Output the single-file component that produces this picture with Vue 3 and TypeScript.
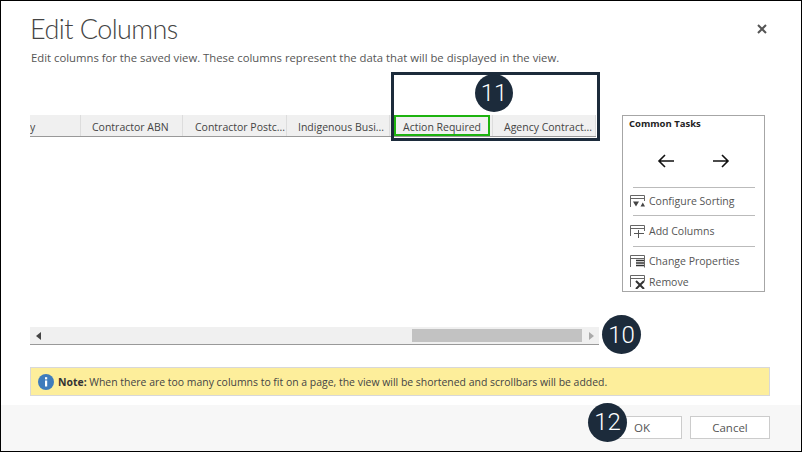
<script setup lang="ts">
const columns = [
  { label: 'y', cls: 'c0' },
  { label: 'Contractor ABN', cls: 'c1' },
  { label: 'Contractor Postc...', cls: 'c2' },
  { label: 'Indigenous Busi...', cls: 'c3' },
  { label: 'Action Required', cls: 'c4 selected' },
  { label: 'Agency Contract...', cls: 'c5' },
]
</script>

<template>
  <div class="dialog">
    <div class="main">
      <header class="head">
        <div>
          <h1 class="title">Edit Columns</h1>
          <p class="sub">Edit columns for the saved view. These columns represent the data that will be displayed in the view.</p>
        </div>
        <svg class="close" width="10" height="10" viewBox="0 0 10 10"><path d="M1 1l8 8M9 1l-8 8" stroke="#555" stroke-width="2" fill="none" /></svg>
      </header>

      <div class="work">
        <div class="grid-area">
          <div class="cols">
            <div v-for="c in columns" :key="c.label" class="col" :class="c.cls">{{ c.label }}</div>
          </div>
          <div class="scrollbar">
            <span class="arrow left"></span>
            <span class="thumb"></span>
            <span class="arrow right"></span>
          </div>
        </div>

        <aside class="tasks">
          <div class="tasks-title">Common Tasks</div>
          <div class="arrows">
            <svg width="18" height="14" viewBox="0 0 18 14"><path d="M17 7H2M8 1L2 7l6 6" stroke="#111" stroke-width="1.6" fill="none" /></svg>
            <svg width="18" height="14" viewBox="0 0 18 14"><path d="M1 7h15M10 1l6 6-6 6" stroke="#111" stroke-width="1.6" fill="none" /></svg>
          </div>
          <hr class="rule r1" />
          <div class="task t-sort">
            <svg width="16" height="13" viewBox="0 0 16 13"><path d="M.5 12V.5h14V6M.5 3.5h14" stroke="#666" fill="none" /><path d="M3 6.5h6l-3 5zM10.5 11.5h4.5l-2.2-4z" fill="#444" /></svg>
            <span>Configure Sorting</span>
          </div>
          <hr class="rule r2" />
          <div class="task t-add">
            <svg width="16" height="13" viewBox="0 0 16 13"><path d="M.5 11V.5h14V6M.5 3.5h14" stroke="#666" fill="none" /><path d="M8.5 5v8M4 8.5h10" stroke="#555" fill="none" /></svg>
            <span>Add Columns</span>
          </div>
          <hr class="rule r3" />
          <div class="task t-prop">
            <svg width="16" height="13" viewBox="0 0 16 13"><path d="M.5 12V.5h14v12M.5 3.5h14" stroke="#666" fill="none" /><path d="M6 5.5h8M6 8h8M6 10.5h8" stroke="#333" stroke-width="1.4" fill="none" /></svg>
            <span>Change Properties</span>
          </div>
          <div class="task t-rem">
            <svg width="16" height="14" viewBox="0 0 16 14"><path d="M.5 12V.5h14V6M.5 3.5h14" stroke="#666" fill="none" /><path d="M6 6l8 8M14 6l-8 8" stroke="#333" stroke-width="2" fill="none" /></svg>
            <span>Remove</span>
          </div>
        </aside>
      </div>

      <div class="note">
        <svg width="16" height="16" viewBox="0 0 16 16"><circle cx="8" cy="8" r="8" fill="#3f7cbc" /><rect x="7" y="6.5" width="2.2" height="6" fill="#fff" /><rect x="7" y="3.2" width="2.2" height="2.2" fill="#fff" /></svg>
        <span><b>Note:</b> When there are too many columns to fit on a page, the view will be shortened and scrollbars will be added.</span>
      </div>
    </div>

    <footer class="foot">
      <button class="btn ok">OK</button>
      <button class="btn cancel">Cancel</button>
    </footer>

    <div class="callout"></div>
    <div class="badge b11">11</div>
    <div class="badge b10">10</div>
    <div class="badge b12">12</div>
  </div>
</template>

<style>
html, body { margin: 0; background: #fff; }
</style>

<style scoped>
.dialog {
  position: relative;
  box-sizing: border-box;
  width: 802px;
  height: 452px;
  border: 1px solid #000;
  background: #fff;
  display: flex;
  flex-direction: column;
  font-family: "Open Sans", "Noto Sans", sans-serif;
  color: #444;
  overflow: hidden;
}
.main { flex: 1; padding: 0 31px 0 29px; display: flex; flex-direction: column; min-height: 0; }
.head { display: flex; justify-content: space-between; align-items: flex-start; height: 114px; flex: none; }
.title { margin: 12px 0 0 0; font-family: Lato, "Open Sans", sans-serif; font-size: 27px; line-height: 32px; font-weight: 300; color: #444; letter-spacing: -0.55px; }
.sub { margin: 5px 0 0 1px; font-size: 11.3px; line-height: 15px; color: #555; white-space: nowrap; }
.close { margin: 23px 3px 0 0; }
.work { display: flex; height: 231px; flex: none; }
.grid-area { width: 569px; flex: none; display: flex; flex-direction: column; justify-content: space-between; height: 230px; }
.cols { display: flex; width: 566px; background: #f0f0f0; border-bottom: 1px solid #999; box-sizing: border-box; height: 22px; }
.col { box-sizing: border-box; height: 21px; line-height: 24px; font-size: 10.5px; color: #444; text-align: left; white-space: nowrap; overflow: hidden; border-right: 1px solid #ddd; flex: none; padding-left: 11px; }
.c0 { width: 51px; padding-left: 0; }
.c1 { width: 102px; }
.c2 { width: 104px; padding-left: 12px; }
.c3 { width: 103px; }
.c4 { width: 96px; }
.c5 { width: 104px; margin-left: 2px; border-left: 1px solid #ddd; border-right: 1px solid #ddd; }
.selected { border: 2px solid #1db30f; line-height: 20px; margin-left: 4px; padding-left: 7px; }
.scrollbar { position: relative; display: flex; align-items: center; justify-content: space-between; height: 18px; background: #f0f0f0; border-bottom: 1px solid #999; box-sizing: border-box; padding: 0 5px 0 6px; }
.arrow { width: 0; height: 0; border: 4px solid transparent; }
.arrow.left { border-right: 5px solid #444; border-left: 0; }
.arrow.right { border-left: 5px solid #aaa; border-right: 0; }
.thumb { position: absolute; left: 382px; top: 2px; width: 170px; height: 13px; background: #c2c2c2; }
.tasks { margin-left: 23px; width: 143px; height: 177px; box-sizing: border-box; border: 1px solid #a6a6a6; padding: 0 0 0 8px; flex: none; overflow: hidden; }
.tasks-title { font-size: 9.5px; font-weight: 700; color: #222; line-height: 14px; margin: 1px 0 0 -2px; }
.arrows { display: flex; gap: 37px; margin: 23px 0 0 26px; height: 14px; }
.rule { border: 0; border-top: 1px solid #bbb; margin: 0 0 0 2px; width: 122px; }
.r1 { margin-top: 19px; }
.r2 { margin-top: 7px; }
.r3 { margin-top: 8px; }
.task { display: flex; align-items: center; gap: 3px; font-size: 10.5px; color: #555; line-height: 14px; height: 14px; white-space: nowrap; margin-left: -1px; }
.task svg { flex: none; }
.t-sort { margin-top: 6px; }
.t-add { margin-top: 8px; }
.t-prop { margin-top: 7px; }
.t-rem { margin-top: 7px; }
.note { display: flex; align-items: center; gap: 4px; box-sizing: border-box; height: 29px; margin-top: 21px; padding-left: 7px; background: #fdee9b; border: 1px solid #d8d8d8; font-size: 10.45px; color: #444; flex: none; }
.note b { color: #333; }
.foot { height: 46px; flex: none; background: #f7f7f7; display: flex; justify-content: flex-end; gap: 8px; padding: 11px 31px 0 0; box-sizing: border-box; }
.btn { box-sizing: border-box; height: 23px; border: 1px solid #ccc; background: #fff; font: 11.5px "Open Sans", "Noto Sans", sans-serif; color: #555; padding: 0; }
.ok { width: 83px; padding-left: 3px; }
.cancel { width: 80px; }
.callout { position: absolute; left: 390px; top: 71px; width: 209px; height: 69px; box-sizing: border-box; border: 3px solid #1c2b3b; }
.badge { position: absolute; width: 38px; height: 38px; border-radius: 50%; background: #1c2b3b; color: #fff; font-family: Roboto, "Liberation Sans", sans-serif; font-weight: 300; font-size: 24px; line-height: 39px; text-align: center; }
.b11 { left: 474px; top: 73px; }
.b10 { left: 601px; top: 314px; width: 39px; height: 39px; line-height: 40px; }
.b12 { left: 587px; top: 402px; width: 39px; height: 39px; line-height: 39px; }
</style>
